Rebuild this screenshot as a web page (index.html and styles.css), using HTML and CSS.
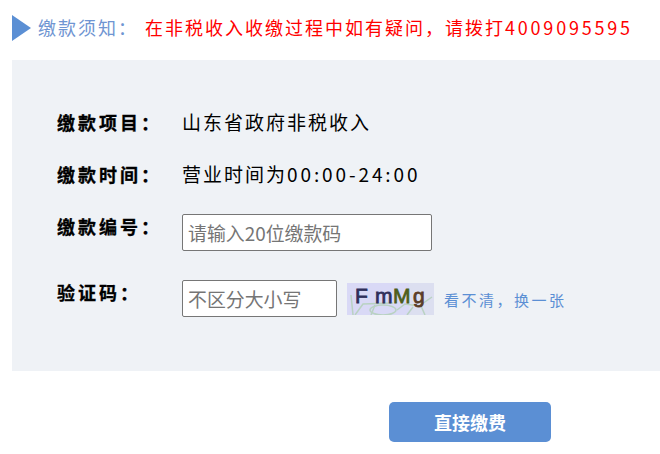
FILE: index.html

```html
<!DOCTYPE html>
<html lang="en">
<head>
  <meta charset="UTF-8" />
  <title>缴款须知</title>
  <link rel="stylesheet" href="styles.css">
</head>
<body>
  <div class="notice">
    <svg class="arrow" width="20" height="26" viewBox="0 0 20 26"><polygon points="0,0 19,13 0,26" fill="#5b8fd4"/></svg>
    <span class="notice-title">缴款须知：</span>
    <span class="notice-text">在非税收入收缴过程中如有疑问，请拨打<span class="phone">4009095595</span></span>
  </div>
  <div class="panel">
    <div class="row row-text">
      <div class="label">缴款项目：</div>
      <div class="value">山东省政府非税收入</div>
    </div>
    <div class="row row-text">
      <div class="label">缴款时间：</div>
      <div class="value">营业时间为<span class="digits">00:00-24:00</span></div>
    </div>
    <div class="row row-code">
      <div class="label">缴款编号：</div>
      <input class="input input-code" type="text" placeholder="请输入20位缴款码">
    </div>
    <div class="row row-captcha">
      <div class="label">验证码：</div>
      <input class="input input-captcha" type="text" placeholder="不区分大小写">
      <svg class="captcha" width="87" height="32" viewBox="0 0 87 32">
        <rect width="87" height="32" fill="#d9d9f6"/>
        <rect x="62" width="25" height="32" fill="#dcdff0"/>
        <g fill="none" stroke="#b9d2c2" stroke-width="1.5">
          <path d="M4 12 L6 32"/>
          <path d="M8 32 L16 21 L46 20"/>
          <ellipse cx="36" cy="27" rx="13" ry="5"/>
          <path d="M50 27 L58 21 L72 23 L85 14"/>
          <path d="M60 32 L66 24 M28 22 L24 32 M74 23 L78 32"/>
        </g>
        <text class="captcha-text" x="8" y="20" fill="#2f2f5a" stroke="#2f2f5a">F</text>
        <text class="captcha-text" x="28" y="20" fill="#2f2f5a" stroke="#2f2f5a">m</text>
        <text class="captcha-text" x="46" y="20" fill="#4d5e1c" stroke="#4d5e1c">M</text>
        <text class="captcha-text" x="66" y="20" fill="#5a3c26" stroke="#5a3c26">g</text>
      </svg>
      <a class="refresh">看不清，换一张</a>
    </div>
  </div>
  <div class="actions">
    <button class="pay-btn">直接缴费</button>
  </div>
</body>
</html>
```

FILE: styles.css

```css
html, body {
  margin: 0;
  padding: 0;
}
body {
  width: 660px;
  height: 454px;
  overflow: hidden;
  background-color: #fff;
  font-family: "Noto Sans CJK SC", "Noto Sans", sans-serif;
}
.notice {
  height: 60px;
  padding: 0 0 7px 12px;
  box-sizing: border-box;
  display: flex;
  align-items: center;
  font-size: 18px;
}
.arrow {
  flex: none;
  margin: 2px 6px 0 0;
}
.notice-title {
  width: 107px;
  color: #6f95d2;
  letter-spacing: 2px;
  white-space: nowrap;
}
.notice-text {
  color: #f00;
  letter-spacing: 2px;
  white-space: nowrap;
}
.phone {
  letter-spacing: 2.8px;
}
.panel {
  margin-left: 12px;
  height: 311px;
  padding: 45px 0 0 45px;
  box-sizing: border-box;
  background-color: #eff2f6;
}
.row {
  display: flex;
  align-items: flex-start;
}
.row-text {
  height: 52px;
  line-height: 34px;
}
.row-code {
  height: 71px;
  padding-top: 5px;
  box-sizing: border-box;
}
.label {
  width: 125px;
  flex: none;
  font-size: 18px;
  font-weight: 700;
  letter-spacing: 3px;
  line-height: 24px;
  color: #000;
  -webkit-text-stroke: 0.3px #000;
}
.row-text .label {
  line-height: 34px;
}
.value {
  font-size: 19px;
  letter-spacing: 2px;
  color: #000;
}
.digits {
  letter-spacing: 2.9px;
}
.input {
  height: 37px;
  padding: 0 5px;
  box-sizing: border-box;
  border: 1px solid #767676;
  border-radius: 2px;
  background-color: #fff;
  font-family: inherit;
  font-size: 18.9px;
  outline: none;
}
.input::placeholder {
  color: #757575;
}
.input-code {
  width: 250px;
}
.input-captcha {
  width: 155px;
}
.captcha {
  flex: none;
  margin: 3px 0 0 10px;
}
.captcha-text {
  font-family: "Liberation Sans", sans-serif;
  font-size: 21px;
  stroke-width: 0.8;
}
.refresh {
  margin: 9px 0 0 10px;
  font-size: 15px;
  letter-spacing: 2.5px;
  line-height: 22px;
  color: #5b8fd4;
  white-space: nowrap;
}
.actions {
  padding: 31px 0 0 389px;
}
.pay-btn {
  display: block;
  width: 162px;
  height: 40px;
  border: none;
  border-radius: 5px;
  background-color: #5b8fd4;
  color: #fff;
  font-family: inherit;
  font-size: 18px;
  font-weight: 700;
}
```
